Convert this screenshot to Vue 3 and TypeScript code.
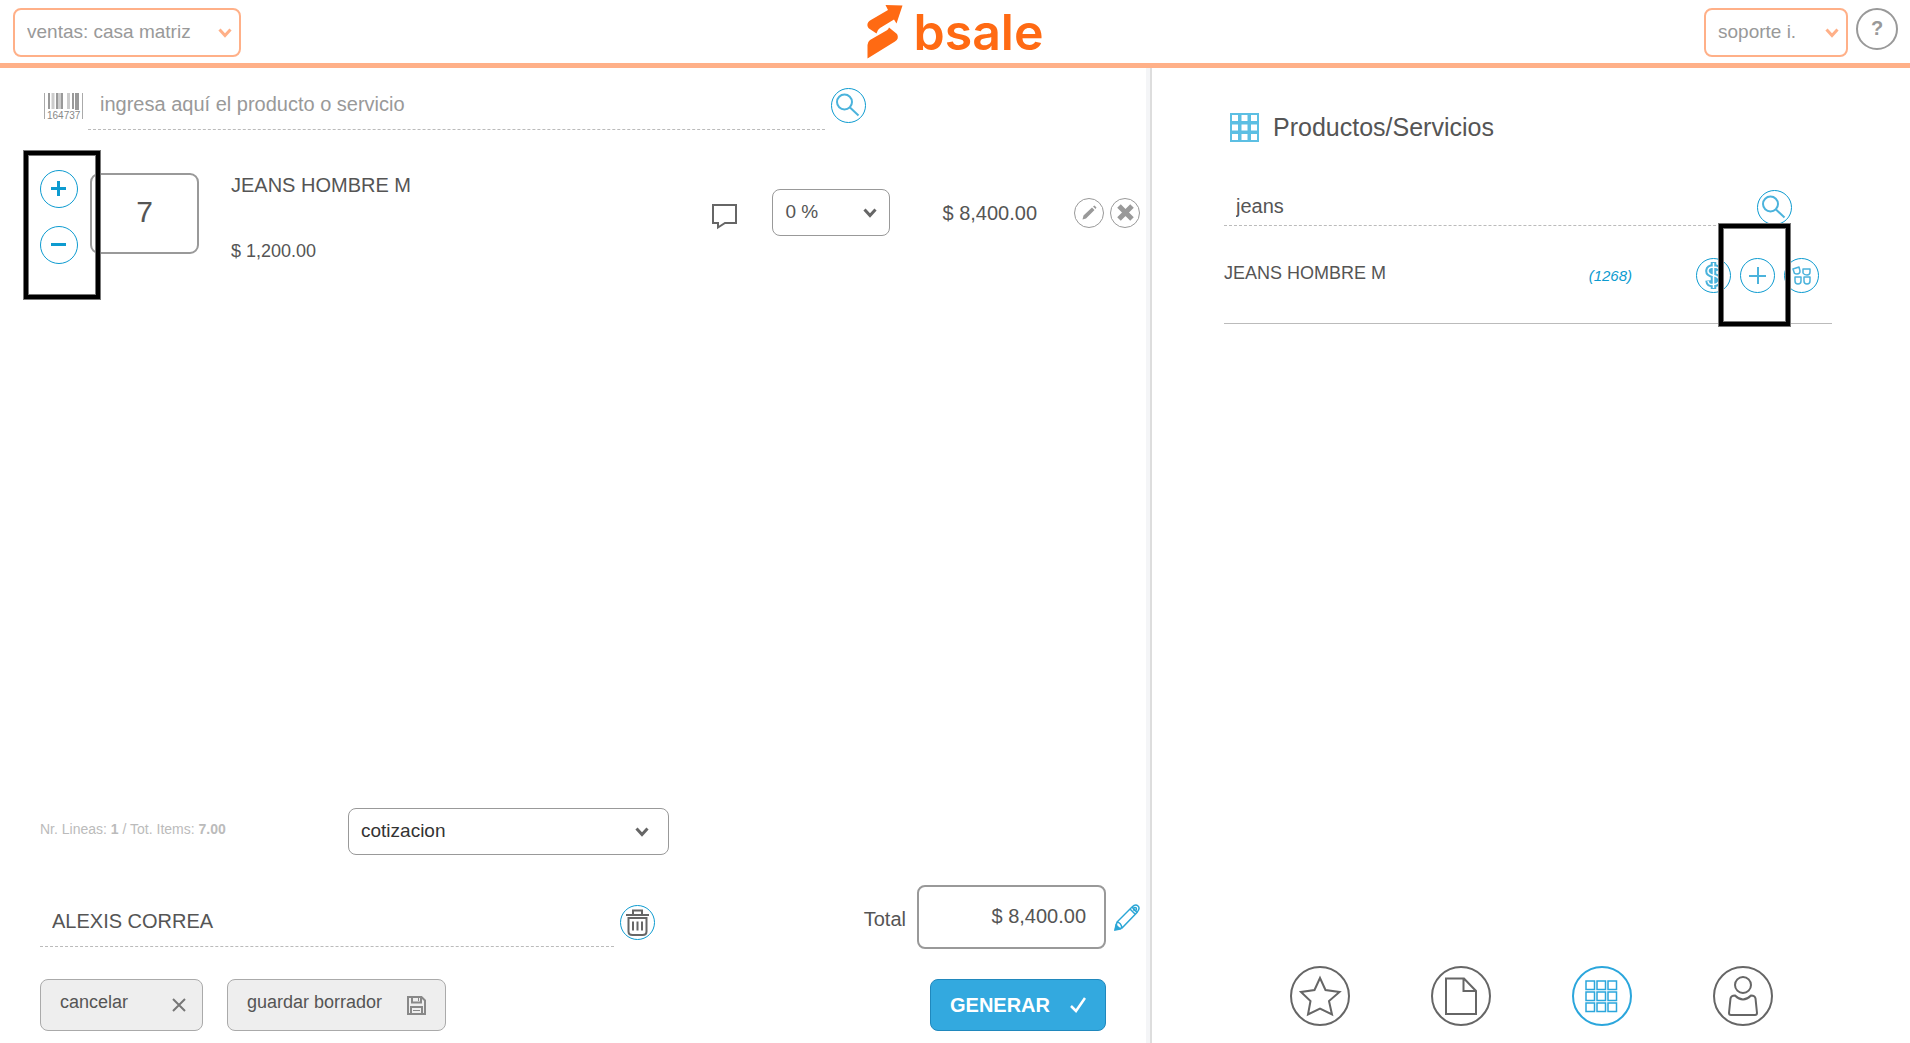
<script setup lang="ts">
import { computed, ref } from 'vue'

const branch = ref('ventas: casa matriz')
const user = ref('soporte i.')
const product = ref('')
const quantity = ref(7)
const discount = ref('0 %')
const documentType = ref('cotizacion')
const client = ref('ALEXIS CORREA')
const query = ref('jeans')
const unitPrice = 1200

const money = (n: number): string =>
  '$ ' + n.toLocaleString('en-US', { minimumFractionDigits: 2, maximumFractionDigits: 2 })
const total = computed(() => money(quantity.value * unitPrice))

const cells = [0, 1, 2]
</script>

<template>
  <div class="app">
    <header class="topbar">
      <div class="select branch">
        <select v-model="branch" aria-label="Sucursal"><option>ventas: casa matriz</option></select>
        <svg class="chev" viewBox="0 0 14 10"><path d="M1.5 1.5 7 7.5l5.5-6" /></svg>
      </div>
      <a class="logo" href="#" aria-label="bsale">
        <svg width="36" height="54" viewBox="0 0 36 54" fill="#ff6a13">
          <path d="M18.5 0 35.500.5 29.500 18.500 27 14.500 13 23q-3 2-3.500 5.500L2 23.500C-.5 21 0 17.500 3 15.500L21 5z" />
          <path d="M22 22.500 30 29q2.500 4.500-2 7.500L.5 53.500V40q0-3 2.500-5l16.500-9.500q2-1 2.500-3z" />
        </svg>
        <span>bsale</span>
      </a>
      <div class="account">
        <div class="select user">
          <select v-model="user" aria-label="Usuario"><option>soporte i.</option></select>
          <svg class="chev" viewBox="0 0 14 10"><path d="M1.5 1.5 7 7.5l5.5-6" /></svg>
        </div>
        <button class="help" type="button">?</button>
      </div>
    </header>

    <main class="panes">
      <section class="sale">
        <div class="search">
          <svg class="barcode" width="39" height="32" viewBox="0 0 39 32">
            <path stroke="#aaa" stroke-width="1" d="M.5 0v26M38.500 0v26" />
            <path stroke="#999" stroke-width="2" d="M5 0v16M13 0v16M18 0v16M29 0v16" />
            <path stroke="#999" stroke-width="4" d="M33 0v17" />
            <path stroke="#ccc" stroke-width="3" d="M9 0v16M15.500 0v16M24.500 0v16" />
            <text x="3" y="26" font-size="10" fill="#888">164737</text>
          </svg>
          <input v-model="product" class="line" aria-label="Producto" placeholder="ingresa aquí el producto o servicio" />
          <button class="round" type="button" aria-label="Buscar">
            <svg width="35" height="35" viewBox="0 0 35 35"><circle cx="13.500" cy="14" r="7.500" /><path d="m19 19.500 8.500 8" /></svg>
          </button>
        </div>

        <div class="item">
          <div class="stepper">
            <button class="round big" type="button" aria-label="Agregar uno" @click="quantity++">
              <svg width="16" height="16" viewBox="0 0 16 16"><path d="M7.500 0v15M0 7.500h15" /></svg>
            </button>
            <button class="round big" type="button" aria-label="Quitar uno" @click="quantity--">
              <svg width="16" height="16" viewBox="0 0 16 16"><path d="M0 7.500h15" /></svg>
            </button>
            <div class="mark mark-stepper"></div>
          </div>
          <input v-model="quantity" class="qty" aria-label="Cantidad" />
          <div class="desc">
            <div class="name">JEANS HOMBRE M</div>
            <div class="unit">$ 1,200.00</div>
          </div>
          <div class="tools">
            <button class="plain comment" type="button" aria-label="Comentario">
              <svg width="25" height="26" viewBox="0 0 25 26" fill="none" stroke="#666" stroke-width="2">
                <path d="M1 1h23v18H13l-7 4.500V19H1z" />
              </svg>
            </button>
            <div class="select dark discount">
              <select v-model="discount" aria-label="Descuento"><option>0 %</option></select>
              <svg class="chev" viewBox="0 0 14 10"><path d="M1.5 1.5 7 7.5l5.5-6" /></svg>
            </div>
            <div class="amount">{{ total }}</div>
            <button class="round small" type="button" aria-label="Editar">
              <svg width="15" height="15" viewBox="0 0 15 15" fill="#999"><path d="m.5 14.500 1-4 8.500-8 2.500 2.500-8.500 8.500zM11 1.500 12.500.5l2 2L13.500 4z" /></svg>
            </button>
            <button class="round small" type="button" aria-label="Eliminar">
              <svg width="17" height="17" viewBox="0 0 17 17" stroke="#999" stroke-width="5"><path d="m2 2 13 13M15 2 2 15" /></svg>
            </button>
          </div>
        </div>

        <footer class="checkout">
          <div class="row">
            <p class="counts">Nr. Lineas: <b>1</b> / Tot. Items: <b>7.00</b></p>
            <div class="select dark doc">
              <select v-model="documentType" aria-label="Documento"><option>cotizacion</option></select>
              <svg class="chev" viewBox="0 0 14 10"><path d="M1.5 1.5 7 7.5l5.5-6" /></svg>
            </div>
          </div>

          <div class="row totals">
            <div class="client">
              <input v-model="client" class="line" aria-label="Cliente" />
              <button class="round" type="button" aria-label="Quitar cliente">
                <svg width="23" height="27" viewBox="0 0 23 27" fill="none" stroke="#666" stroke-width="2">
                  <path d="M0 6h23M7 5V1.500h9V5M2.500 9h18v13.500q0 3.500-4 3.500h-10q-4 0-4-3.500zM7 12.500v9M11.500 12.500v9M16 12.500v9" />
                </svg>
              </button>
            </div>
            <label class="total-label" for="total">Total</label>
            <input id="total" class="total" :value="total" readonly />
            <button class="plain" type="button" aria-label="Editar total">
              <svg width="26" height="27" viewBox="0 0 26 27" fill="none" stroke="#2ba6d6" stroke-width="1.5">
                <path d="m1.500 25 1.500-7L18 3l5 5.500L8 24zM16 5l5.500 5.500M18 3q3.500-3.500 6-1T23 8.500M3 18q4 .5 5 6" />
                <circle cx="21" cy="5" r="1.500" />
                <path d="m1 26 1-5 4 4z" fill="#2ba6d6" />
              </svg>
            </button>
          </div>

          <div class="row actions">
            <button class="btn cancel" type="button">
              <span>cancelar</span>
              <svg width="14" height="14" viewBox="0 0 14 14" stroke="#777" stroke-width="2"><path d="m1 1 12 12M13 1 1 13" /></svg>
            </button>
            <button class="btn draft" type="button">
              <span>guardar borrador</span>
              <svg width="19" height="19" viewBox="0 0 19 19" fill="none" stroke="#888" stroke-width="2">
                <path d="M1 1h13.500L18 4.500V18H1zM5 1v5.500h9V1M4 18v-7h11v7" /><path d="M11.500 2v3M6 14.500h7" stroke-width="1" />
              </svg>
            </button>
            <button class="btn primary" type="button">
              GENERAR
              <svg width="16" height="16" viewBox="0 0 16 16" fill="none" stroke="#fff" stroke-width="2.5"><path d="m1 9 5 5L15 1" /></svg>
            </button>
          </div>
        </footer>
      </section>

      <aside class="catalog">
        <h1 class="title">
          <svg width="29" height="29" viewBox="0 0 29 29" fill="none" stroke="#5cbfe3" stroke-width="2">
            <template v-for="r in cells" :key="r">
              <rect v-for="c in cells" :key="c" :x="1 + c * 9.5" :y="1 + r * 9.5" width="8" height="8" />
            </template>
          </svg>
          Productos/Servicios
        </h1>
        <div class="lookup">
          <input v-model="query" class="line" aria-label="Buscar producto" />
          <button class="round" type="button" aria-label="Buscar">
            <svg width="35" height="35" viewBox="0 0 35 35"><circle cx="13.500" cy="14" r="7.500" /><path d="m19 19.500 8.500 8" /></svg>
          </button>
        </div>
        <div class="result">
          <span class="label">JEANS HOMBRE M</span>
          <i class="stock">(1268)</i>
          <button class="round" type="button" aria-label="Precio">
            <svg width="17" height="29" viewBox="0 0 17 29">
              <path stroke-width="5.5" d="M14 9.500Q13.500 6 8.500 6T3 9.500t5.500 5 5.500 5-5.500 4-5.500-4M8.500 1v27" />
              <path class="hollow" d="M14 9Q13.500 6 8.500 6T3 9.500t5.500 5 5.500 5-5.500 4-5.500-3.500M8.500 2v25" />
            </svg>
          </button>
          <div class="add">
            <button class="round" type="button" aria-label="Agregar">
              <svg width="17" height="17" viewBox="0 0 17 17"><path d="M9 0v17M0 9h17" /></svg>
            </button>
            <div class="mark mark-add"></div>
          </div>
          <button class="round" type="button" aria-label="Variantes">
            <svg width="19" height="19" viewBox="0 0 19 19" stroke-width="1.5" stroke-linejoin="round">
              <path d="m1 3 6-2 1 4q0 3-3 3T2 6zM11 3h7v3q0 3-3 3t-4-2zM3 11h6v4q0 3-3 3t-3-3zM12 11h6v4q0 3-3 3t-3-3z" />
            </svg>
          </button>
        </div>

        <nav class="tabs">
          <a href="#" aria-label="Favoritos">
            <svg width="60" height="60" viewBox="0 0 60 60">
              <circle cx="30" cy="30" r="29" />
              <path d="m30 12 5.500 12 14 2L39 35l3 13.500-12-6-12 6L20.500 35 11 26l13.500-2z" />
            </svg>
          </a>
          <a href="#" aria-label="Documentos">
            <svg width="60" height="60" viewBox="0 0 60 60">
              <circle cx="30" cy="30" r="29" /><path d="M15 12.500H33L45 25v23H15zM32.500 12.500V25H45" />
            </svg>
          </a>
          <a href="#" class="active" aria-label="Productos">
            <svg width="60" height="60" viewBox="0 0 60 60">
              <circle cx="30" cy="30" r="29" />
              <g stroke-width="1.5">
                <template v-for="r in cells" :key="r">
                  <rect v-for="c in cells" :key="c" :x="14 + c * 11" :y="15 + r * 11" width="8.5" height="8.5" />
                </template>
              </g>
            </svg>
          </a>
          <a href="#" aria-label="Clientes">
            <svg width="60" height="60" viewBox="0 0 60 60">
              <circle cx="30" cy="30" r="29" /><circle cx="30" cy="19" r="8" />
              <path d="M22 29.500q8 8 16 0 4 0 4.500 3L44 47q0 2-2 2H18q-2 0-2-2l1.500-14.500q.5-3 4.500-3z" />
            </svg>
          </a>
        </nav>
      </aside>
    </main>
  </div>
</template>

<style>
body {
  margin: 0;
}
</style>

<style scoped>
.app {
  min-height: 100vh;
  display: flex;
  flex-direction: column;
  background: #fff;
  color: #555;
  font-family: "Liberation Sans", Arial, sans-serif;
  font-size: 18px;
}
.app * {
  box-sizing: border-box;
}
button,
input,
select {
  font: inherit;
  color: inherit;
  margin: 0;
  padding: 0;
  border: 0;
  background: none;
}
svg {
  display: block;
  flex: none;
}
.topbar {
  display: grid;
  grid-template-columns: 1fr auto 1fr;
  align-items: start;
  padding: 5px 12px 5px 13px;
  height: 68px;
  border-bottom: 5px solid #ffb088;
  color: #999;
}
.select {
  position: relative;
  flex: none;
}
.select select {
  appearance: none;
  display: block;
  width: 100%;
  height: 49px;
  padding: 0 30px 2px 12px;
  border: 2px solid #ffb088;
  border-radius: 8px;
  background: #fff;
  font-size: 19px;
}
.chev {
  position: absolute;
  right: 9px;
  top: 50%;
  width: 14px;
  height: 10px;
  margin-top: -5px;
  fill: none;
  stroke: #ffb088;
  stroke-width: 3;
  pointer-events: none;
}
.dark select {
  height: 47px;
  border: 1px solid #999;
}
.dark .chev {
  right: 13px;
  stroke: #666;
}
.dark.doc .chev {
  right: 20px;
}
.branch {
  width: 228px;
  margin-top: 3px;
}
.user {
  width: 144px;
}
.discount {
  width: 118px;
}
.doc {
  width: 321px;
  color: #333;
}
.logo {
  display: flex;
  gap: 10px;
  color: #ff6a13;
  text-decoration: none;
  font: 600 50px/54px Inter, sans-serif;
}
.account {
  display: flex;
  justify-content: flex-end;
  gap: 8px;
  margin-top: 3px;
}
.help {
  width: 42px;
  height: 42px;
  padding-bottom: 2px;
  border: 2px solid #999;
  border-radius: 50%;
  font-size: 20px;
  font-weight: 700;
}
.panes {
  flex: 1;
  display: grid;
  grid-template-columns: 576fr 379fr;
}
.sale {
  display: flex;
  flex-direction: column;
  padding: 20px 10px 12px 40px;
  border-right: 2px solid #ddd;
  box-shadow: inset -4px 0 #f4f5f7;
}
.search,
.client,
.lookup {
  display: flex;
  align-items: flex-start;
  gap: 6px;
}
.search {
  width: 826px;
}
.search .line {
  margin-left: -1px;
}
.barcode {
  margin: 5px 0 0 4px;
}
.line {
  flex: 1;
  min-width: 0;
  height: 42px;
  padding: 0 12px 9px;
  border-bottom: 1px dashed #bbb;
  outline: 0;
  font-size: 20px;
}
.line::placeholder {
  color: #999;
  opacity: 1;
}
.round {
  flex: none;
  display: flex;
  align-items: center;
  justify-content: center;
  width: 35px;
  height: 35px;
  border: 1px solid #0d9bd0;
  border-radius: 50%;
  fill: none;
  stroke: #4bb3dc;
  stroke-width: 2;
}
.round .hollow {
  stroke: #fff;
  stroke-width: 1.5;
}
.big {
  width: 38px;
  height: 38px;
  stroke: #0d9bd0;
  stroke-width: 3;
}
.small {
  width: 30px;
  height: 30px;
  border-color: #999;
  stroke: none;
}
.plain {
  flex: none;
}
.item {
  display: flex;
  align-items: flex-start;
  margin-top: 40px;
}
.stepper {
  position: relative;
  display: flex;
  flex-direction: column;
  gap: 18px;
}
.mark {
  position: absolute;
  border: 4px solid #000;
  outline: 1px solid #777;
  box-shadow: inset 0 0 0 1px #777;
  pointer-events: none;
}
.mark-stepper {
  inset: -19px -22px -35px -16px;
}
.mark-add {
  inset: -34px -15px -33px -21px;
}
.qty {
  width: 109px;
  height: 81px;
  margin: 3px 32px 0 12px;
  padding-bottom: 4px;
  border: 2px solid #999;
  border-radius: 9px;
  text-align: center;
  font-size: 30px;
}
.desc {
  flex: 1;
  padding-top: 3px;
  line-height: 24px;
}
.name {
  font-size: 20px;
}
.unit {
  margin-top: 42px;
}
.tools {
  display: flex;
  align-items: center;
  height: 85px;
}
.comment {
  padding-top: 8px;
}
.discount {
  margin: 0 52px 0 35px;
}
.amount {
  margin-right: 37px;
  padding-top: 2px;
  font-size: 20px;
}
.small + .small {
  margin-left: 6px;
}
.checkout {
  margin-top: auto;
  display: flex;
  flex-direction: column;
  gap: 30px;
}
.row {
  display: flex;
  align-items: center;
}
.counts {
  width: 308px;
  margin: 0;
  padding-bottom: 6px;
  color: #bbb;
  font-size: 14px;
}
.client {
  flex: 0 1 615px;
  align-self: flex-end;
  padding-bottom: 2px;
}
.total-label {
  margin: 0 11px 0 auto;
  padding-top: 4px;
  font-size: 20px;
}
.total {
  width: 189px;
  height: 64px;
  margin-right: 8px;
  padding: 0 18px 2px 0;
  border: 2px solid #999;
  border-radius: 8px;
  text-align: right;
  font-size: 20px;
}
.actions {
  gap: 24px;
}
.btn {
  display: flex;
  align-items: center;
  justify-content: space-between;
  height: 52px;
  padding: 0 19px;
  border: 1px solid #aaa;
  border-radius: 8px;
  background: #eee;
}
.btn span {
  padding-bottom: 5px;
}
.cancel {
  width: 163px;
  padding-right: 16px;
}
.draft {
  width: 219px;
}
.primary {
  width: 176px;
  margin: 0 34px 0 auto;
  border-color: #2088bd;
  background: #33a9df;
  color: #fff;
  font-size: 20px;
  font-weight: 700;
}
.catalog {
  display: flex;
  flex-direction: column;
  padding: 45px 72px 17px;
}
.title {
  display: flex;
  align-items: center;
  gap: 14px;
  margin: 0 0 48px 6px;
  font-size: 25px;
  font-weight: 400;
  line-height: 29px;
}
.lookup {
  margin-right: 46px;
}
.lookup .line {
  height: 36px;
  padding-bottom: 3px;
}
.result {
  display: flex;
  align-items: flex-start;
  gap: 9px;
  height: 98px;
  margin-right: 6px;
  padding: 32px 13px 0 0;
  border-bottom: 1px solid #bbb;
}
.label {
  flex: 1;
  line-height: 30px;
}
.stock {
  margin-right: 55px;
  color: #0d9bd0;
  font-size: 15px;
  line-height: 36px;
}
.add {
  position: relative;
}
.tabs {
  display: flex;
  justify-content: center;
  gap: 81px;
  margin-top: auto;
}
.tabs a {
  fill: none;
  stroke: #666;
  stroke-width: 2;
}
.tabs .active {
  stroke: #2ba6dc;
}
</style>
